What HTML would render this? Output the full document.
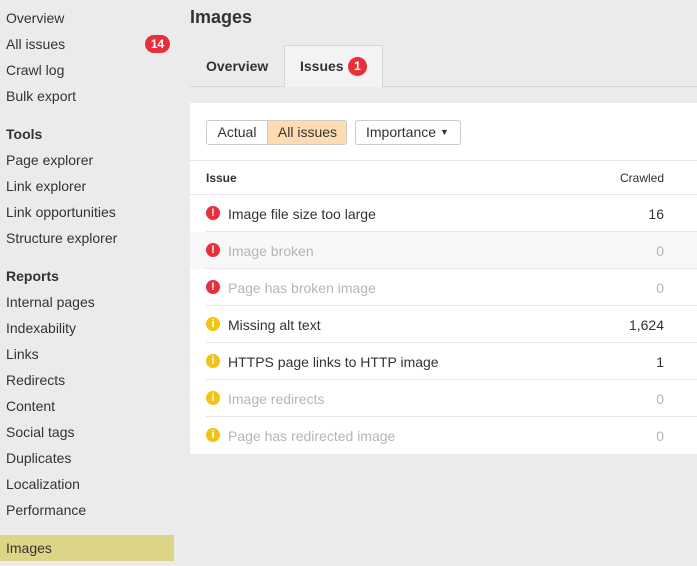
<!DOCTYPE html>
<html><head><style>
*{margin:0;padding:0;box-sizing:border-box}
body{width:697px;height:566px;background:#ebebeb;font-family:"Liberation Sans",Arial,sans-serif;position:relative;overflow:hidden;color:#333}
.s{position:absolute;left:6px;font-size:14px;color:#333;line-height:16px}
.h{font-weight:bold;color:#333}
.sel{position:absolute;left:0;top:535px;width:174px;height:26px;background:#dcd586}
.badge{position:absolute;background:#e8303a;color:#fff;font-weight:bold;font-size:12px;border-radius:10px;text-align:center;line-height:18px}
.main{position:absolute;left:190px;top:103px;width:507px;height:351px;background:#fff}
.row{position:absolute;left:0;width:507px;height:37px;font-size:14px}
.row .t{position:absolute;left:38px;top:11px}
.row .n{position:absolute;right:33px;top:11px}
.row .ln{position:absolute;left:16px;right:0;bottom:0;height:1px;background:#e6e6e6}
.ic{position:absolute;left:16px;top:11px;width:14px;height:14px;border-radius:50%;color:#fff;font-weight:bold;font-size:11px;text-align:center;line-height:14px}
.r{background:#e8303a}.y{background:#f3c313}
.dim{color:#b5b5b5}
</style></head><body>
<div class="sel"></div>
<div class="s" style="top:10px">Overview</div>
<div class="s" style="top:36px">All issues</div>
<div class="badge" style="left:145px;top:35px;width:25px">14</div>
<div class="s" style="top:62px">Crawl log</div>
<div class="s" style="top:88px">Bulk export</div>
<div class="s h" style="top:126px">Tools</div>
<div class="s" style="top:152px">Page explorer</div>
<div class="s" style="top:178px">Link explorer</div>
<div class="s" style="top:204px">Link opportunities</div>
<div class="s" style="top:230px">Structure explorer</div>
<div class="s h" style="top:268px">Reports</div>
<div class="s" style="top:294px">Internal pages</div>
<div class="s" style="top:320px">Indexability</div>
<div class="s" style="top:346px">Links</div>
<div class="s" style="top:372px">Redirects</div>
<div class="s" style="top:398px">Content</div>
<div class="s" style="top:424px">Social tags</div>
<div class="s" style="top:450px">Duplicates</div>
<div class="s" style="top:476px">Localization</div>
<div class="s" style="top:502px">Performance</div>
<div class="s" style="top:540px">Images</div>

<div style="position:absolute;left:190px;top:7px;font-size:18px;font-weight:bold;color:#333">Images</div>
<div style="position:absolute;left:190px;top:86px;width:507px;height:1px;background:#d8d8d8"></div>
<div style="position:absolute;left:206px;top:58px;font-size:14px;font-weight:bold;color:#333">Overview</div>
<div style="position:absolute;left:284px;top:45px;width:99px;height:42px;background:#f3f3f3;border:1px solid #d8d8d8;border-bottom:none"></div>
<div style="position:absolute;left:300px;top:58px;font-size:14px;font-weight:bold;color:#333">Issues</div>
<div class="badge" style="left:348px;top:57px;width:19px;height:19px;line-height:19px">1</div>

<div class="main">
 <div style="position:absolute;left:16px;top:17px;width:141px;height:25px;border:1px solid #ccc;border-radius:3px;overflow:hidden;font-size:14px">
  <div style="position:absolute;left:0;top:0;width:60px;height:23px;text-align:center;line-height:23px;color:#333">Actual</div>
  <div style="position:absolute;left:60px;top:0;width:80px;height:23px;background:#fcdcb0;border-left:1px solid #e9c28e;text-align:center;line-height:23px;color:#333">All issues</div>
 </div>
 <div style="position:absolute;left:165px;top:17px;width:106px;height:25px;border:1px solid #ccc;border-radius:3px;font-size:14px;line-height:23px;padding-left:10px;color:#333">Importance <span style="font-size:9px;position:relative;top:-2px">&#9660;</span></div>
 <div style="position:absolute;left:0;top:57px;width:507px;height:1px;background:#e6e6e6"></div>
 <div style="position:absolute;left:16px;top:68px;font-size:12px;font-weight:bold;color:#333">Issue</div>
 <div style="position:absolute;right:33px;top:68px;font-size:12px;color:#333">Crawled</div>
 <div style="position:absolute;left:0;top:91px;width:507px;height:1px;background:#e6e6e6"></div>
 <div class="row" style="top:92px"><span class="ic r">!</span><span class="t">Image file size too large</span><span class="n">16</span><div class="ln"></div></div>
 <div class="row dim" style="top:129px;background:#f8f8f8"><span class="ic r">!</span><span class="t">Image broken</span><span class="n">0</span><div class="ln"></div></div>
 <div class="row dim" style="top:166px"><span class="ic r">!</span><span class="t">Page has broken image</span><span class="n">0</span><div class="ln"></div></div>
 <div class="row" style="top:203px"><span class="ic y">i</span><span class="t">Missing alt text</span><span class="n">1,624</span><div class="ln"></div></div>
 <div class="row" style="top:240px"><span class="ic y">i</span><span class="t">HTTPS page links to HTTP image</span><span class="n">1</span><div class="ln"></div></div>
 <div class="row dim" style="top:277px"><span class="ic y">i</span><span class="t">Image redirects</span><span class="n">0</span><div class="ln"></div></div>
 <div class="row dim" style="top:314px"><span class="ic y">i</span><span class="t">Page has redirected image</span><span class="n">0</span></div>
</div>
</body></html>
